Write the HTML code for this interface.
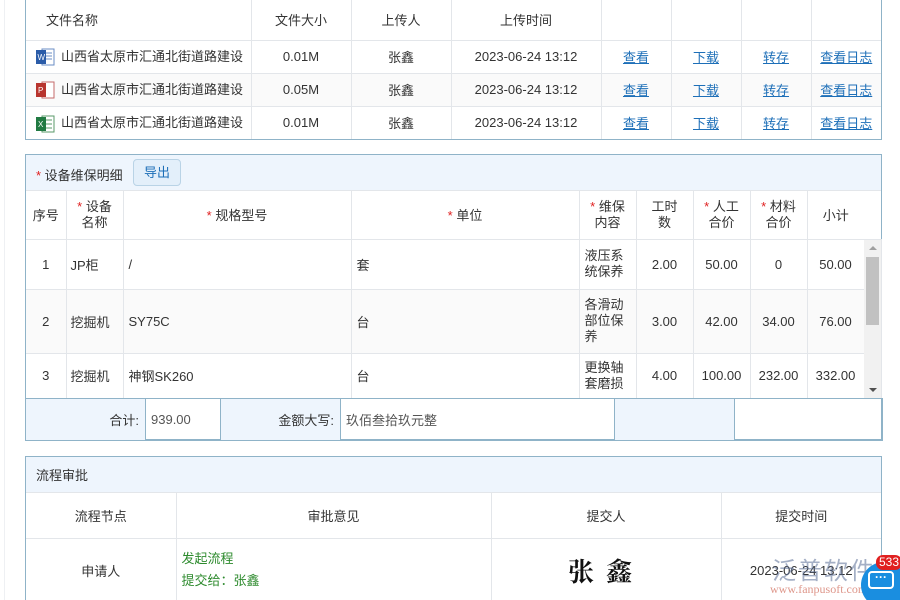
<!DOCTYPE html>
<html style="width:900px;height:600px;overflow:hidden"><head><meta charset="utf-8"><style>
*{box-sizing:border-box;margin:0;padding:0}
body{width:900px;height:600px;overflow:hidden;background:#fff;font-family:"Liberation Sans","Noto Sans CJK SC",sans-serif;font-size:13px;color:#333;position:relative}
.a{position:absolute}
table{border-collapse:collapse;table-layout:fixed;position:absolute}
td{border:1px solid #e3e6ea;text-align:center;vertical-align:middle;overflow:hidden;white-space:nowrap}
.box{position:absolute;border:1px solid #8fb3c8;left:25px;width:857px}
a{color:#1d6fb8;text-decoration:underline}
.r{color:#e02020}
.ic{display:inline-block;width:20px;height:20px;vertical-align:middle;margin-right:6px;position:relative}
.wrap{white-space:normal;line-height:16px}
.f td{border:1px solid #8fb3c8}
</style></head><body>
<div class="a" style="left:4px;top:0;width:1px;height:600px;background:#eef0f3"></div>

<div class="box" style="top:-1px;height:141px;border-top:none"></div>
<table style="left:26px;top:-1px;width:855px">
<colgroup><col style="width:225px"><col style="width:100px"><col style="width:100px"><col style="width:150px"><col style="width:70px"><col style="width:70px"><col style="width:70px"><col style="width:70px"></colgroup>
<tr style="height:41px"><td style="text-align:left;padding-left:20px;border-top:none;border-left:none">文件名称</td><td style="border-top:none">文件大小</td><td style="border-top:none">上传人</td><td style="border-top:none">上传时间</td><td style="border-top:none"></td><td style="border-top:none"></td><td style="border-top:none"></td><td style="border-top:none;border-right:none"></td></tr>
<tr style="height:33px"><td style="text-align:left;padding-left:9px;border-left:none"><span class="ic"><svg width="20" height="20"><rect x="7" y="2" width="12" height="16" fill="#fff" stroke="#6a8cc4"/><line x1="10" y1="6" x2="17" y2="6" stroke="#6a8cc4"/><line x1="10" y1="9" x2="17" y2="9" stroke="#6a8cc4"/><line x1="10" y1="12" x2="17" y2="12" stroke="#6a8cc4"/><rect x="1" y="3" width="10" height="14" fill="#2b5ca8"/><text x="2.5" y="13" font-size="8" fill="#fff" font-family="Liberation Sans">W</text></svg></span>山西省太原市汇通北街道路建设</td><td>0.01M</td><td>张鑫</td><td>2023-06-24 13:12</td><td><a>查看</a></td><td><a>下载</a></td><td><a>转存</a></td><td style="border-right:none"><a>查看日志</a></td></tr>
<tr style="height:33px;background:#fafafa"><td style="text-align:left;padding-left:9px;border-left:none"><span class="ic"><svg width="20" height="20"><rect x="7" y="2" width="12" height="16" fill="#fff" stroke="#c46a6a"/><rect x="1" y="3" width="10" height="14" fill="#b8342e"/><text x="3" y="13" font-size="8" fill="#fff" font-family="Liberation Sans">P</text></svg></span>山西省太原市汇通北街道路建设</td><td>0.05M</td><td>张鑫</td><td>2023-06-24 13:12</td><td><a>查看</a></td><td><a>下载</a></td><td><a>转存</a></td><td style="border-right:none"><a>查看日志</a></td></tr>
<tr style="height:33px"><td style="text-align:left;padding-left:9px;border-left:none;border-bottom:none"><span class="ic"><svg width="20" height="20"><rect x="7" y="2" width="12" height="16" fill="#fff" stroke="#5a9a6a"/><line x1="10" y1="6" x2="17" y2="6" stroke="#5a9a6a"/><line x1="10" y1="10" x2="17" y2="10" stroke="#5a9a6a"/><line x1="10" y1="14" x2="17" y2="14" stroke="#5a9a6a"/><rect x="1" y="3" width="10" height="14" fill="#217a42"/><text x="3" y="13" font-size="8" fill="#fff" font-family="Liberation Sans">X</text></svg></span>山西省太原市汇通北街道路建设</td><td style="border-bottom:none">0.01M</td><td style="border-bottom:none">张鑫</td><td style="border-bottom:none">2023-06-24 13:12</td><td style="border-bottom:none"><a>查看</a></td><td style="border-bottom:none"><a>下载</a></td><td style="border-bottom:none"><a>转存</a></td><td style="border:none"><a>查看日志</a></td></tr>
</table>

<div class="box" style="top:154px;height:286px"></div>
<div class="a" style="left:26px;top:155px;width:855px;height:36px;background:#eef5fd;border-bottom:1px solid #e3e6ea"></div>
<div class="a" style="left:36px;top:165px"><span class="r">*</span> 设备维保明细</div>
<div class="a" style="left:133px;top:159px;width:48px;height:27px;border:1px solid #b9d3e6;border-radius:4px;background:#e3effa;color:#1d6fb8;text-align:center;line-height:25px">导出</div>
<table style="left:26px;top:191px;width:855px">
<colgroup><col style="width:40px"><col style="width:57px"><col style="width:228px"><col style="width:228px"><col style="width:57px"><col style="width:57px"><col style="width:57px"><col style="width:57px"><col style="width:74px"></colgroup>
<tr style="height:48px"><td style="border-left:none;border-top:none">序号</td><td class="wrap" style="border-top:none"><span class="r">*</span> 设备<br>名称</td><td style="border-top:none"><span class="r">*</span> 规格型号</td><td style="border-top:none"><span class="r">*</span> 单位</td><td class="wrap" style="border-top:none"><span class="r">*</span> 维保<br>内容</td><td class="wrap" style="border-top:none">工时<br>数</td><td class="wrap" style="border-top:none"><span class="r">*</span> 人工<br>合价</td><td class="wrap" style="border-top:none"><span class="r">*</span> 材料<br>合价</td><td style="border-top:none;border-right:none;padding-right:17px">小计</td></tr>
<tr style="height:50px"><td style="border-left:none">1</td><td style="text-align:left;padding-left:4px">JP柜</td><td style="text-align:left;padding-left:5px">/</td><td style="text-align:left;padding-left:5px">套</td><td class="wrap" style="text-align:left;padding-left:5px">液压系<br>统保养</td><td>2.00</td><td>50.00</td><td>0</td><td style="padding-right:17px">50.00</td></tr>
<tr style="height:64px;background:#fafafa"><td style="border-left:none">2</td><td style="text-align:left;padding-left:4px">挖掘机</td><td style="text-align:left;padding-left:5px">SY75C</td><td style="text-align:left;padding-left:5px">台</td><td class="wrap" style="text-align:left;padding-left:5px">各滑动<br>部位保<br>养</td><td>3.00</td><td>42.00</td><td>34.00</td><td style="padding-right:17px">76.00</td></tr>
<tr style="height:45px"><td style="border-left:none">3</td><td style="text-align:left;padding-left:4px">挖掘机</td><td style="text-align:left;padding-left:5px">神钢SK260</td><td style="text-align:left;padding-left:5px">台</td><td class="wrap" style="text-align:left;padding-left:5px;vertical-align:top;padding-top:6px">更换轴<br>套磨损</td><td>4.00</td><td>100.00</td><td>232.00</td><td style="padding-right:17px">332.00</td></tr>
</table>
<div class="a" style="left:864px;top:240px;width:17px;height:158px;background:#f1f1f1"></div>
<div class="a" style="left:866px;top:257px;width:13px;height:68px;background:#c1c1c1"></div>
<div class="a" style="left:869px;top:246px;width:0;height:0;border-left:4px solid transparent;border-right:4px solid transparent;border-bottom:4px solid #a0a0a0"></div>
<div class="a" style="left:869px;top:388px;width:0;height:0;border-left:4px solid transparent;border-right:4px solid transparent;border-top:4px solid #505050"></div>
<table class="f" style="left:25px;top:398px;width:857px">
<colgroup><col style="width:120px"><col style="width:75px"><col style="width:120px"><col style="width:274px"><col style="width:120px"><col style="width:148px"></colgroup>
<tr style="height:42px"><td style="background:#eef5fd;text-align:right;padding-right:6px">合计:</td><td style="text-align:left;padding-left:5px;color:#555">939.00</td><td style="background:#eef5fd;text-align:right;padding-right:6px">金额大写:</td><td style="text-align:left;padding-left:5px;color:#555">玖佰叁拾玖元整</td><td style="background:#eef5fd"></td><td></td></tr>
</table>

<div class="box" style="top:456px;height:160px"></div>
<div class="a" style="left:26px;top:457px;width:855px;height:36px;background:#eef5fd;border-bottom:1px solid #e3e6ea"></div>
<div class="a" style="left:36px;top:465px">流程审批</div>
<table style="left:26px;top:493px;width:855px">
<colgroup><col style="width:150px"><col style="width:315px"><col style="width:230px"><col style="width:160px"></colgroup>
<tr style="height:45px"><td style="border-left:none;border-top:none">流程节点</td><td style="border-top:none">审批意见</td><td style="border-top:none">提交人</td><td style="border-top:none;border-right:none">提交时间</td></tr>
<tr style="height:64px"><td style="border-left:none">申请人</td><td style="text-align:left;padding-left:5px;color:#2e8b2e;line-height:22px">发起流程<br>提交给：张鑫</td><td style="font-family:'Noto Serif CJK SC',serif;font-size:26px;font-weight:bold;letter-spacing:12px;color:#111">张鑫</td><td style="border-right:none">2023-06-24 13:12</td></tr>
</table>

<div class="a" style="left:772px;top:551px;font-size:24px;color:rgba(90,110,150,.55);font-family:'Noto Sans CJK SC',sans-serif;letter-spacing:2px">泛普软件</div>
<div class="a" style="left:770px;top:582px;font-size:12px;color:rgba(200,80,60,.6);font-family:'Liberation Serif',serif">www.fanpusoft.com</div>
<div class="a" style="left:861px;top:562px;width:46px;height:46px;border-radius:50%;background:#1a8ee0"></div>
<div class="a" style="left:868px;top:571px;width:26px;height:18px;border:2px solid #fff;border-radius:4px;color:#fff;font-size:12px;line-height:8px;text-align:center;font-weight:bold">···</div>
<div class="a" style="left:876px;top:555px;width:26px;height:15px;border-radius:7px;background:#e02020;color:#fff;font-size:12px;line-height:15px;text-align:center">533</div>
</body></html>
